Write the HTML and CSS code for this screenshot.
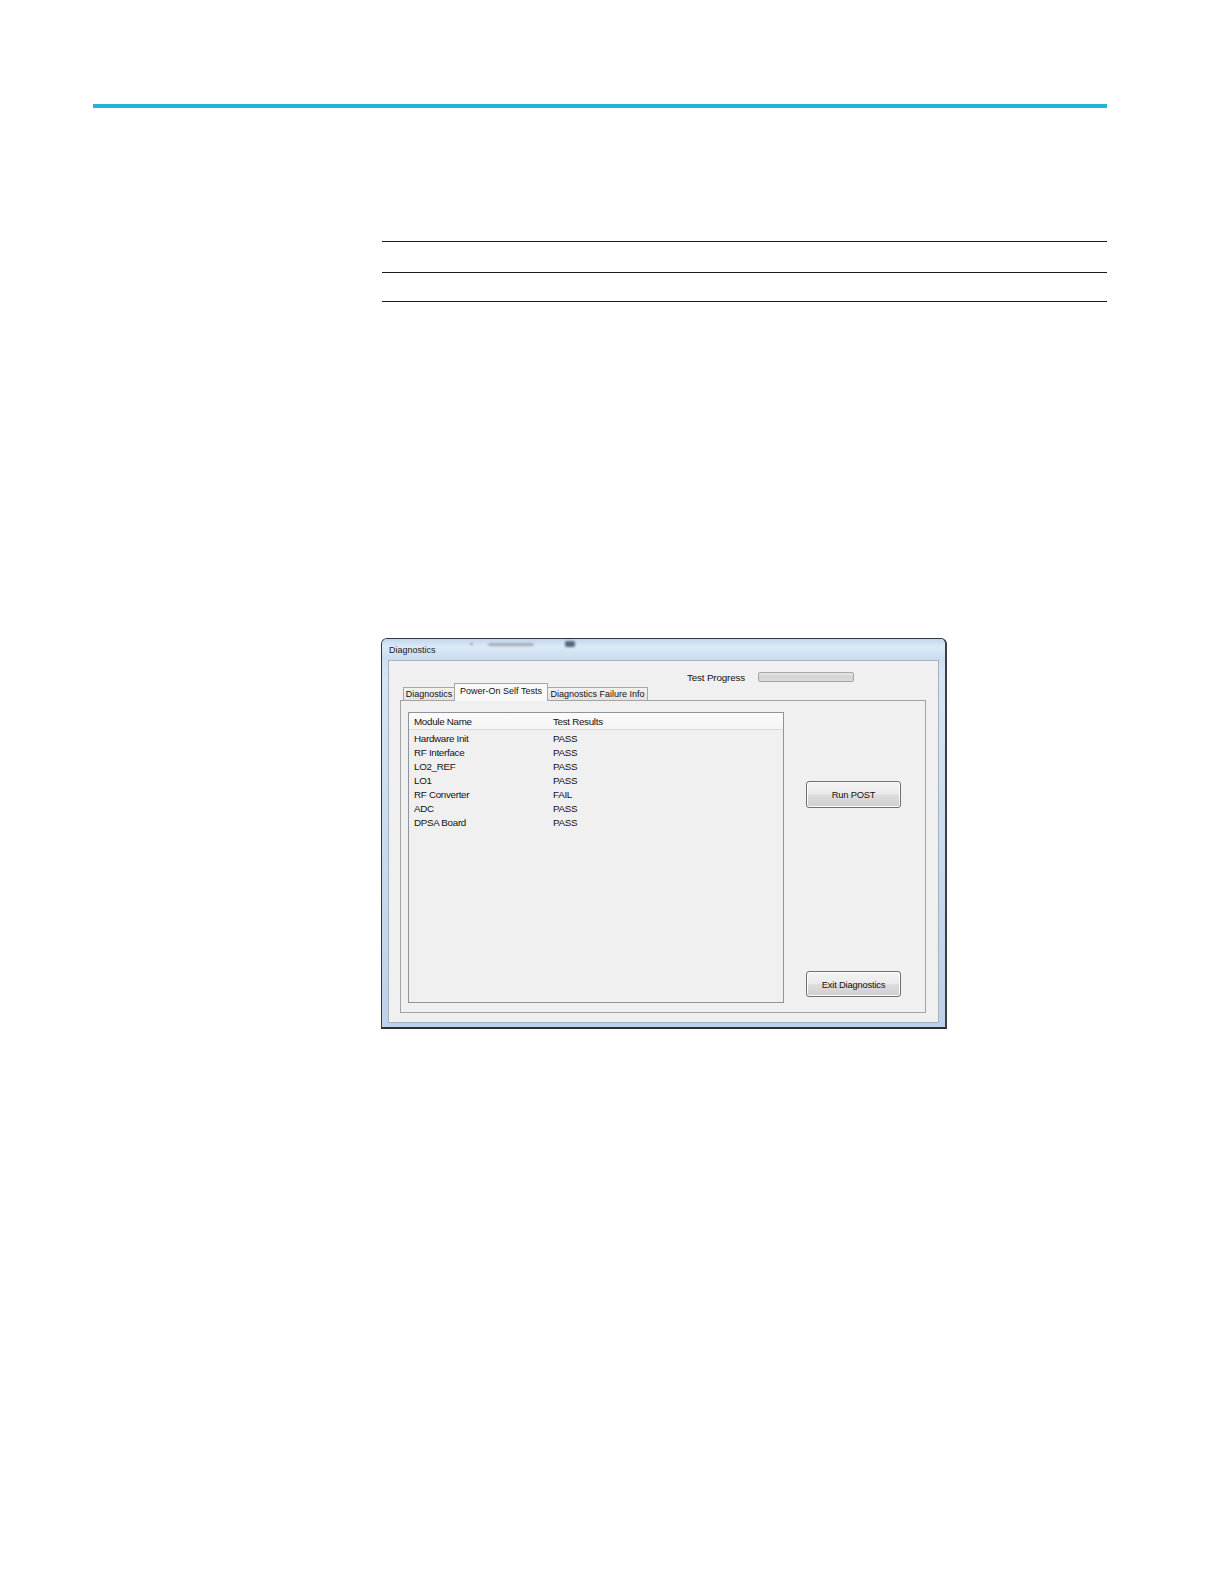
FILE: index.html
```html
<!DOCTYPE html>
<html>
<head>
<meta charset="utf-8">
<title>Diagnostics</title>
<link rel="stylesheet" href="styles.css">
</head>
<body>
<div class="page">
  <div class="rule-blue"></div>
  <div class="lines">
    <div class="line-row first"></div>
    <div class="line-row second"></div>
  </div>

  <div class="window">
    <div class="titlebar">
      <span class="title">Diagnostics</span>
      <span class="smudge s1"></span>
      <span class="smudge s2"></span>
      <span class="smudge s3"></span>
    </div>
    <div class="client">
      <div class="progress-row">
        <span class="progress-label">Test Progress</span>
        <div class="progress-bar"></div>
      </div>
      <div class="tabs">
        <div class="tab t1">Diagnostics</div>
        <div class="tab active">Power-On Self Tests</div>
        <div class="tab t3">Diagnostics Failure Info</div>
      </div>
      <div class="panel">
        <div class="listbox">
          <div class="list-header">
            <span class="col1">Module Name</span>
            <span class="col2">Test Results</span>
          </div>
          <div class="rows">
            <div class="row"><span class="col1">Hardware Init</span><span class="col2">PASS</span></div>
            <div class="row"><span class="col1">RF Interface</span><span class="col2">PASS</span></div>
            <div class="row"><span class="col1">LO2_REF</span><span class="col2">PASS</span></div>
            <div class="row"><span class="col1">LO1</span><span class="col2">PASS</span></div>
            <div class="row"><span class="col1">RF Converter</span><span class="col2">FAIL</span></div>
            <div class="row"><span class="col1">ADC</span><span class="col2">PASS</span></div>
            <div class="row"><span class="col1">DPSA Board</span><span class="col2">PASS</span></div>
          </div>
        </div>
        <div class="side">
          <div class="btn run">Run POST</div>
          <div class="btn exit">Exit Diagnostics</div>
        </div>
      </div>
    </div>
  </div>
</div>
</body>
</html>
```

FILE: styles.css
```css
html, body {
  margin: 0;
  padding: 0;
  background: #ffffff;
}
body {
  width: 1224px;
  height: 1584px;
  font-family: "Liberation Sans", Arial, sans-serif;
  color: #161010;
}
.page {
  width: 1224px;
  padding-top: 104px;
}
.rule-blue {
  margin-left: 93px;
  width: 1014px;
  height: 4px;
  background: #21b3d8;
}
.lines {
  margin-left: 382px;
  margin-top: 133px;
  width: 725px;
}
.line-row {
  border-top: 1px solid #1c1c1c;
}
.line-row.first {
  height: 30px;
}
.line-row.second {
  height: 28px;
  border-bottom: 1px solid #1c1c1c;
}

/* window */
.window {
  box-sizing: border-box;
  margin-left: 381px;
  margin-top: 336px;
  width: 566px;
  height: 391px;
  border: 1px solid #33383f;
  border-bottom: 2px solid #2b2f35;
  border-right: 2px solid #3a3f46;
  border-radius: 6px 6px 0 0;
  background: linear-gradient(180deg, #c6d9ee 0%, #d6e5f4 10%, #bcd2ea 100%);
  padding: 0 6px 4px 6px;
  display: flex;
  flex-direction: column;
}
.titlebar {
  position: relative;
  height: 21px;
  display: flex;
  align-items: center;
  background: linear-gradient(180deg, #c2d6ec 0%, #dce9f6 35%, #d2e2f2 70%, #c8dbee 100%);
  margin: 0 -6px;
  padding: 0 7px;
  border-radius: 5px 5px 0 0;
}
.title {
  font-size: 9px;
  color: #1a1a1a;
  padding-top: 1px;
}
.smudge {
  position: absolute;
  filter: blur(1.2px);
  border-radius: 2px;
}
.smudge.s1 {
  left: 88px;
  top: 4px;
  width: 3px;
  height: 2px;
  background: #8a96a6;
}
.smudge.s2 {
  left: 106px;
  top: 4px;
  width: 46px;
  height: 3px;
  background: #a3adba;
}
.smudge.s3 {
  left: 183px;
  top: 2px;
  width: 10px;
  height: 6px;
  background: #56657a;
}

.client {
  flex: 1;
  background: #f0f0f0;
  border: 1px solid #a3b1c2;
  padding: 0 12px 0 11px;
  display: flex;
  flex-direction: column;
}
.progress-row {
  height: 22px;
  display: flex;
  align-items: flex-start;
  justify-content: flex-end;
  padding-right: 72px;
}
.progress-label {
  font-size: 9.8px;
  letter-spacing: -0.15px;
  margin-top: 11px;
  margin-right: 13px;
  color: #161010;
}
.progress-bar {
  box-sizing: border-box;
  margin-top: 11px;
  width: 96px;
  height: 10px;
  border: 1px solid #a5a5a5;
  border-radius: 2px;
  background: linear-gradient(180deg, #e6e6e6 0%, #d2d2d2 50%, #dedede 100%);
}

.tabs {
  height: 17px;
  display: flex;
  align-items: flex-end;
  padding-left: 3px;
  position: relative;
  z-index: 2;
}
.tab {
  box-sizing: border-box;
  font-size: 9px;
  color: #161010;
  border: 1px solid #a7a7a7;
  border-bottom: none;
  display: flex;
  align-items: center;
  justify-content: center;
  background: linear-gradient(180deg, #f2f2f2 0%, #e3e3e3 100%);
}
.tab.t1 {
  width: 51px;
  height: 13px;
  border-right: none;
  padding-bottom: 1px;
}
.tab.active {
  width: 94px;
  height: 18px;
  margin-bottom: -1px;
  background: #f9f9f9;
  padding-bottom: 4px;
}
.tab.t3 {
  width: 100px;
  height: 13px;
  border-left: none;
  padding-bottom: 1px;
}

.panel {
  box-sizing: border-box;
  width: 526px;
  height: 313px;
  border: 1px solid #a3a3a3;
  background: #f0f0f0;
  padding: 11px 0 0 7px;
  display: flex;
}
.listbox {
  box-sizing: border-box;
  width: 376px;
  height: 291px;
  border: 1px solid #8f949b;
  background: #f0f0f0;
}
.list-header {
  height: 17px;
  box-sizing: border-box;
  border-bottom: 1px solid #d9d9d9;
  background: linear-gradient(180deg, #fbfbfb 0%, #f5f5f5 100%);
  display: flex;
  align-items: center;
  padding-left: 5px;
  padding-top: 1px;
  font-size: 9.8px;
  letter-spacing: -0.3px;
}
.rows {
  padding-top: 1px;
}
.row {
  height: 14px;
  display: flex;
  align-items: center;
  padding-left: 5px;
  font-size: 9.8px;
  letter-spacing: -0.3px;
}
.col1 {
  width: 139px;
}
.side {
  display: flex;
  flex-direction: column;
  margin-left: 22px;
  padding-top: 69px;
}
.btn {
  box-sizing: border-box;
  width: 95px;
  border: 1px solid #707070;
  border-radius: 3px;
  background: linear-gradient(180deg, #f3f3f3 0%, #ebebeb 48%, #dddddd 52%, #cfcfcf 100%);
  box-shadow: inset 0 0 0 1px #fbfbfb;
  display: flex;
  align-items: center;
  justify-content: center;
  font-size: 9.4px;
  letter-spacing: -0.2px;
  color: #161010;
}
.btn.run {
  height: 27px;
}
.btn.exit {
  height: 26px;
  margin-top: 163px;
}
```
